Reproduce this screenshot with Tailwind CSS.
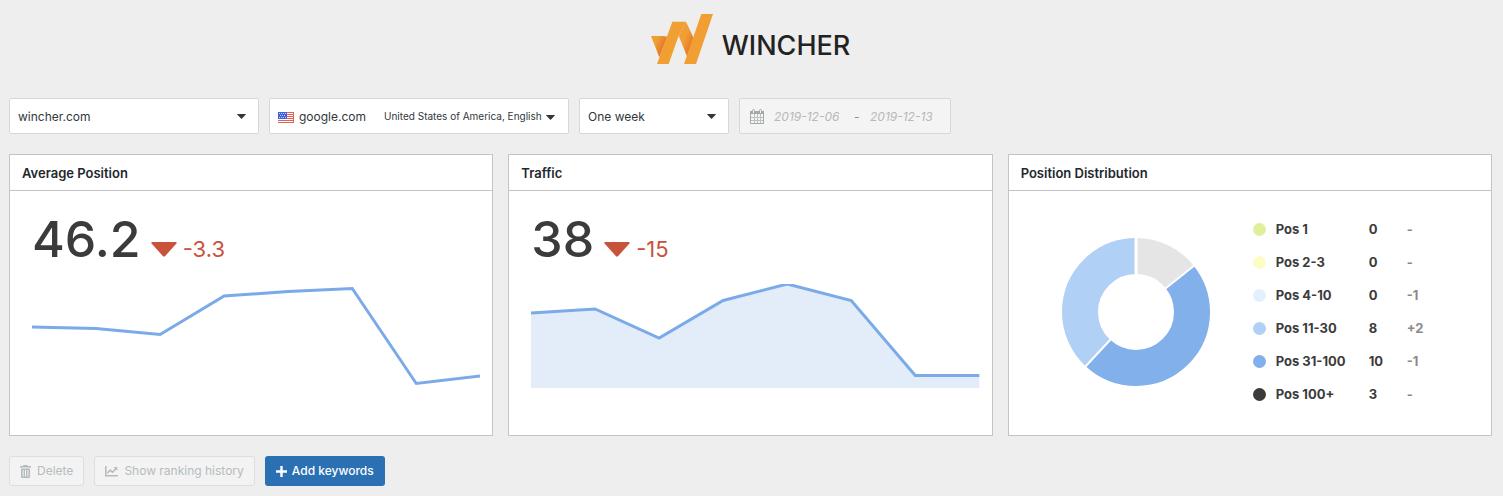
<!DOCTYPE html>
<html lang="en">
<head>
<meta charset="utf-8">
<meta name="viewport" content="width=device-width, initial-scale=1">
<title>Wincher</title>
<script src="https://cdn.jsdelivr.net/npm/@tailwindcss/browser@4"></script>
</head>
<body class="min-h-screen bg-[#eeeeee] font-['Inter',sans-serif] text-[12px] text-[#32373c]">
<main class="pl-[9px] pr-[11px]">
  <header class="flex h-[98px] items-start justify-center gap-[9px] pt-[14px]">
    <svg class="h-[50px] w-[62px]" viewBox="9 12 186 150" aria-hidden="true">
      <defs>
        <linearGradient id="fold-a" gradientUnits="userSpaceOnUse" x1="18" y1="92" x2="46" y2="106"><stop offset="0.2" stop-color="#f19f33"/><stop offset="1" stop-color="#e57c2c"/></linearGradient>
        <linearGradient id="fold-b" gradientUnits="userSpaceOnUse" x1="106" y1="88" x2="132" y2="98"><stop offset="0.1" stop-color="#f19f33"/><stop offset="1" stop-color="#e57c2c"/></linearGradient>
      </defs>
      <path d="M9 78H45L58 80L34 142Z" fill="url(#fold-a)"/>
      <path d="M92 77L114 35L137 84L118 142Z" fill="url(#fold-b)"/>
      <path d="M27 162L73 35H114L92 77L62 162ZM108 162L160 12H195L144 162Z" fill="#f19f33"/>
    </svg>
    <span class="pt-[16px] text-[27px] leading-[32px] font-medium text-[#222222]">WINCHER</span>
  </header>

  <form class="flex gap-[10px]">
    <div class="relative w-[250px]">
      <select aria-label="Website" class="h-9 w-full appearance-none rounded-[2px] border border-[#d5d8d8] bg-white px-2 pt-[2px]"><option>wincher.com</option></select>
      <svg class="pointer-events-none absolute top-4 right-[13px] h-[5px] w-[9px]" viewBox="0 0 9 5" fill="#32373c" aria-hidden="true"><path d="M0 0.3Q0 0 0.5 0H8.5Q9 0 9 0.3L5 4.6Q4.500 5 4 4.600Z"/></svg>
    </div>
    <div class="relative flex h-9 w-[300px] items-center rounded-[2px] border border-[#d5d8d8] bg-white pl-2">
      <svg class="mt-[2px] mr-[5px] h-[11px] w-4" viewBox="0 0 16 11" aria-hidden="true">
        <path fill="#fff" d="M0 0h16v11H0z"/>
        <path stroke="#f5584e" d="M0 .5h16M0 2.500h16M0 4.500h16M0 6.500h16M0 8.500h16"/><path stroke="#c0705c" d="M0 10.500h16M15.500 0v11"/>
        <path fill="#3f62e0" d="M0 0h9v7H0z"/>
        <path stroke="#c4d0fa" stroke-dasharray="1 1" d="M1 1.500h7M2 3.500h6M1 5.500h7"/>
      </svg>
      <label for="region" class="w-[85px] pt-[2px]">google.com</label>
      <select id="region" class="h-full flex-1 appearance-none bg-transparent text-[10px]"><option>United States of America, English</option></select>
      <svg class="pointer-events-none absolute top-4 right-[13px] h-[5px] w-[9px]" viewBox="0 0 9 5" fill="#32373c" aria-hidden="true"><path d="M0 0.3Q0 0 0.5 0H8.5Q9 0 9 0.3L5 4.6Q4.500 5 4 4.600Z"/></svg>
    </div>
    <div class="relative w-[150px]">
      <select aria-label="Period" class="h-9 w-full appearance-none rounded-[2px] border border-[#d5d8d8] bg-white px-2 pt-[2px]"><option>One week</option></select>
      <svg class="pointer-events-none absolute top-4 right-[13px] h-[5px] w-[9px]" viewBox="0 0 9 5" fill="#32373c" aria-hidden="true"><path d="M0 0.3Q0 0 0.5 0H8.5Q9 0 9 0.3L5 4.6Q4.500 5 4 4.600Z"/></svg>
    </div>
    <div class="flex h-9 w-[212px] items-center rounded-[2px] border border-[#d5d8d8] bg-[#f4f4f4] pl-[10px] text-[#b4b9b9]">
      <svg class="mr-[10px] h-[15px] w-[14px]" viewBox="0 0 14 15" fill="none" stroke="#a3a9a5" aria-hidden="true">
        <path d="M.5 3v11.500h13V3"/><path fill="#a3a9a5" stroke="none" d="M0 2h14v3H0z"/><path stroke="#f4f4f4" stroke-width="3" d="M3.500 0v4M10.500 0v4"/><path d="M2.500 4V1.500a1 1 0 0 1 2 0V4M9.500 4V1.500a1 1 0 0 1 2 0V4"/><path stroke="#bcc1be" d="M1 8.500h12M1 11.500h12M4.500 5v9M7.500 5v9M10.500 5v9"/>
      </svg>
      <input aria-label="From date" disabled value="2019-12-06" class="w-[80px] pt-[2px] italic">
      <span class="w-4 pt-[2px] text-[#8a8f8f]">-</span>
      <input aria-label="To date" disabled value="2019-12-13" class="w-[80px] pt-[2px] italic">
    </div>
  </form>

  <div class="mt-5 grid grid-cols-3 gap-[15px]">
    <section class="h-[282px] border border-[#c3c4c7] bg-white">
      <h2 class="flex h-9 items-center border-b border-[#c3c4c7] px-3 pt-[2px] text-[13px] font-semibold text-[#23282d]">Average Position</h2>
      <div class="pt-4 pr-3 pl-[22px]">
        <div class="flex items-baseline text-[#3b3b3b]"><span class="text-[50px] leading-[64px] font-medium">46.2</span>
          <svg class="mr-[6px] ml-[10px] h-[15px] w-[26px]" viewBox="0 0 26 15" fill="#c9523a" aria-hidden="true"><path d="M1 0H25Q26.500 .5 25 2L14 14.200Q13 15 12 14.200L1 2Q-.5 .5 1 0Z"/></svg>
          <span class="text-[22px] text-[#c9523a]">-3.3</span></div>
        <svg class="mt-[13px] h-[105px] w-full" viewBox="0 1 448 105" preserveAspectRatio="none" fill="none" stroke="#7aabe8" stroke-width="3" role="img" aria-label="Average position over one week"><path d="M0 44L64 45.500L128 51.500L192 13L256 8.500L320 5.500L384 100.500L448 93"/></svg>
      </div>
    </section>
    <section class="h-[282px] border border-[#c3c4c7] bg-white">
      <h2 class="flex h-9 items-center border-b border-[#c3c4c7] px-3 pt-[2px] text-[13px] font-semibold text-[#23282d]">Traffic</h2>
      <div class="pt-4 pr-3 pl-[22px]">
        <div class="flex items-baseline text-[#3b3b3b]"><span class="text-[50px] leading-[64px] font-medium">38</span>
          <svg class="mr-[6px] ml-[10px] h-[15px] w-[26px]" viewBox="0 0 26 15" fill="#c9523a" aria-hidden="true"><path d="M1 0H25Q26.500 .5 25 2L14 14.200Q13 15 12 14.200L1 2Q-.5 .5 1 0Z"/></svg>
          <span class="text-[22px] text-[#c9523a]">-15</span></div>
        <svg class="mt-[13px] h-[105px] w-full" viewBox="0 1 448 105" preserveAspectRatio="none" fill="none" role="img" aria-label="Traffic over one week"><path fill="#e3edfa" d="M0 30L64 26L128 55L192 17.500L256 1L320 17.500L384 92.500H448V105H0Z"/><path stroke="#7aabe8" stroke-width="3" d="M0 30L64 26L128 55L192 17.500L256 1L320 17.500L384 92.500H448"/></svg>
      </div>
    </section>
    <section class="h-[282px] border border-[#c3c4c7] bg-white">
      <h2 class="flex h-9 items-center border-b border-[#c3c4c7] px-3 pt-[2px] text-[13px] font-semibold text-[#23282d]">Position Distribution</h2>
      <div class="flex pt-[22px] pl-[52px]">
        <svg class="mt-[24px] mr-[42px] size-[150px] shrink-0" viewBox="-75 -75 150 150" fill="none" stroke-width="36" role="img" aria-label="Distribution of positions">
          <g transform="rotate(-90)"><circle r="56" pathLength="21" stroke="#e5e5e5" stroke-dasharray="3 18"/><circle r="56" pathLength="21" stroke="#82b0ea" stroke-dasharray="10 11" stroke-dashoffset="-3"/><circle r="56" pathLength="21" stroke="#b1d0f5" stroke-dasharray="8 13" stroke-dashoffset="-13"/></g>
          <path stroke="#fff" stroke-width="3" d="M0 0V-75"/><path stroke="#fff" stroke-width="2" d="M0 0L58.640 -46.760M0 0L-51.010 54.980"/>
        </svg>
        <table class="text-[13px] font-bold text-[#3b3b3b]">
          <tbody>
            <tr class="h-[33px]"><td class="w-[23px]"><i class="block size-[13px] rounded-full bg-[#dff09c]"></i></td><th scope="row" class="w-[93px] text-left">Pos 1</th><td class="w-[38px]">0</td><td class="text-[#8b8b8b]">-</td></tr>
            <tr class="h-[33px]"><td><i class="block size-[13px] rounded-full bg-[#fbfdc4]"></i></td><th scope="row" class="text-left">Pos 2-3</th><td>0</td><td class="text-[#8b8b8b]">-</td></tr>
            <tr class="h-[33px]"><td><i class="block size-[13px] rounded-full bg-[#e2f0fe]"></i></td><th scope="row" class="text-left">Pos 4-10</th><td>0</td><td class="text-[#8b8b8b]">-1</td></tr>
            <tr class="h-[33px]"><td><i class="block size-[13px] rounded-full bg-[#b1d0f5]"></i></td><th scope="row" class="text-left">Pos 11-30</th><td>8</td><td class="text-[#8b8b8b]">+2</td></tr>
            <tr class="h-[33px]"><td><i class="block size-[13px] rounded-full bg-[#82b0ea]"></i></td><th scope="row" class="text-left">Pos 31-100</th><td>10</td><td class="text-[#8b8b8b]">-1</td></tr>
            <tr class="h-[33px]"><td><i class="block size-[13px] rounded-full bg-[#3b3b3b]"></i></td><th scope="row" class="text-left">Pos 100+</th><td>3</td><td class="text-[#8b8b8b]">-</td></tr>
          </tbody>
        </table>
      </div>
    </section>
  </div>

  <div class="mt-5 flex gap-[10px] pb-[10px]">
    <button type="button" disabled class="flex h-[30px] items-center gap-[6px] rounded-[3px] border border-[#dddddd] bg-[#f3f3f3] px-[10px] text-[#b5bcc0]">
      <svg class="h-[13px] w-[11px]" viewBox="0 0 11 13" fill="currentColor" aria-hidden="true"><path fill-rule="evenodd" d="M3.500 0h4l.5 1h3v1.500H0V1h3zM1 3.500h9V12q0 1-1 1H2q-1 0-1-1zM2.600 5v6.500h1V5zM5 5v6.500h1V5zM7.400 5v6.500h1V5z"/></svg>Delete</button>
    <button type="button" disabled class="flex h-[30px] items-center gap-[6px] rounded-[3px] border border-[#dddddd] bg-[#f3f3f3] px-[10px] text-[#b5bcc0]">
      <svg class="h-[11px] w-[13px]" viewBox="0 0 13 11" fill="none" stroke="currentColor" stroke-width="1.600" aria-hidden="true"><path d="M.8 0v9.800H13M2.500 7L5.200 4.200L7.500 6.200L11 2.500"/><path fill="currentColor" stroke="none" d="M8.500 1H12.300V4.800Z"/></svg>Show ranking history</button>
    <button type="button" class="flex h-[30px] items-center gap-[5px] rounded-[3px] bg-[#2a70b2] px-[11px] font-medium text-white">
      <svg class="size-[11px]" viewBox="0 0 11 11" stroke="currentColor" stroke-width="2.400" aria-hidden="true"><path d="M5.500 0v11M0 5.500h11"/></svg>Add keywords</button>
  </div>
</main>
</body>
</html>
